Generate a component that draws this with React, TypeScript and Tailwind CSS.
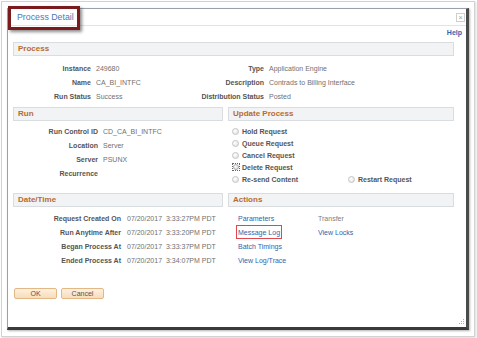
import React from "react";

const Header = ({ title }: { title: string }) => (
  <div className="flex h-[14px] items-center border border-[#d9dde0] bg-[#f1f3f4] pl-[4px] text-[8px] font-bold text-[#b96b30]">
    {title}
  </div>
);

const Radio = ({ focused }: { focused?: boolean }) =>
  focused ? (
    <span className="inline-flex h-[8px] w-[8px] items-center justify-center border border-dotted border-[#666]">
      <span className="inline-block h-[6px] w-[6px] rounded-full border border-[#a8a8a8] bg-[radial-gradient(circle_at_35%_35%,#ffffff,#d6d6d6)]" />
    </span>
  ) : (
    <span className="inline-block h-[7px] w-[7px] rounded-full border border-[#c4c4c4] bg-[radial-gradient(circle_at_35%_35%,#ffffff,#dedede)]" />
  );

const RadioRow = ({ label, focused }: { label: string; focused?: boolean }) => (
  <div className={focused ? "flex h-[12px] items-center gap-[2px]" : "flex h-[12px] items-center gap-[3px]"}>
    <Radio focused={focused} />
    <span className="font-bold text-[#555]">{label}</span>
  </div>
);

const dates = [
  ["Request Created On", "3:33:27PM PDT"],
  ["Run Anytime After", "3:33:20PM PDT"],
  ["Began Process At", "3:33:37PM PDT"],
  ["Ended Process At", "3:34:07PM PDT"],
];

export default function App() {
  return (
    <div className="relative h-[338px] w-[477px] overflow-hidden bg-white font-['Liberation_Sans',Arial,sans-serif] text-[7px] leading-none">
      <div className="ml-[1px] mt-[1px] h-[336px] w-[474px] border border-[#d2d2d2] bg-white pl-[5px] pt-[6px] shadow-[1px_1px_2px_rgba(0,0,0,0.15)]">
        <div className="relative h-[322px] w-[462px] border-b-[3px] border-l border-r-[3px] border-t border-b-[#3a3a3a] border-l-[#a0a0a0] border-r-[#4a4a4a] border-t-[#9aa3ad] bg-white shadow-[1px_1px_2px_rgba(0,0,0,0.3)]">
          {/* title bar */}
          <div className="flex h-[17px] items-center justify-between border-b border-[#e3e3e3] pl-[9px] pr-[1px]">
            <span className="text-[8.8px] text-[#4a78b8]">Process Detail</span>
            <span className="flex h-[9px] w-[9px] items-center justify-center border border-[#cfcfcf] text-[7px] text-[#999]">
              ×
            </span>
          </div>

          <div className="flex h-[13px] items-center justify-end pr-[4px]">
            <span className="text-[7px] font-bold text-[#2f64ae]">Help</span>
          </div>

          <div className="ml-[5px] mt-[3px] w-[441px]">
            {/* Process */}
            <Header title="Process" />
            <div className="mt-[5px]">
              {[
                ["Instance", "249680", "Type", "Application Engine"],
                ["Name", "CA_BI_INTFC", "Description", "Contrads to Billing Interface"],
                ["Run Status", "Success", "Distribution Status", "Posted"],
              ].map(([l1, v1, l2, v2]) => (
                <div key={l1} className="flex h-[14px] items-center">
                  <span className="w-[78px] text-right font-bold text-[#555]">{l1}</span>
                  <span className="ml-[5px] w-[80px] text-[#707070]">{v1}</span>
                  <span className="w-[88px] text-right font-bold text-[#555]">{l2}</span>
                  <span className="ml-[5px] text-[#707070]">{v2}</span>
                </div>
              ))}
            </div>

            {/* Run / Update Process */}
            <div className="mt-[4px] flex gap-[5px]">
              <div className="w-[210px]">
                <Header title="Run" />
                <div className="mt-[3px]">
                  {[
                    ["Run Control ID", "CD_CA_BI_INTFC"],
                    ["Location", "Server"],
                    ["Server", "PSUNX"],
                    ["Recurrence", ""],
                  ].map(([l, v]) => (
                    <div key={l} className="flex h-[14px] items-center">
                      <span className="w-[85px] text-right font-bold text-[#555]">{l}</span>
                      <span className="ml-[5px] text-[#707070]">{v}</span>
                    </div>
                  ))}
                </div>
              </div>
              <div className="w-[226px]">
                <Header title="Update Process" />
                <div className="mt-[4px] pl-[4px]">
                  <RadioRow label="Hold Request" />
                  <RadioRow label="Queue Request" />
                  <RadioRow label="Cancel Request" />
                  <RadioRow label="Delete Request" focused />
                  <div className="flex h-[12px] items-center">
                    <div className="w-[116px]">
                      <RadioRow label="Re-send Content" />
                    </div>
                    <RadioRow label="Restart Request" />
                  </div>
                </div>
              </div>
            </div>

            {/* Date/Time / Actions */}
            <div className="mt-[8px] flex gap-[5px]">
              <div className="w-[210px]">
                <Header title="Date/Time" />
                <div className="mt-[4px]">
                  {dates.map(([l, t]) => (
                    <div key={l} className="flex h-[14px] items-center">
                      <span className="w-[108px] text-right font-bold text-[#555]">{l}</span>
                      <span className="ml-[6px] whitespace-pre text-[#707070]">{`07/20/2017  ${t}`}</span>
                    </div>
                  ))}
                </div>
              </div>
              <div className="w-[226px]">
                <Header title="Actions" />
                <div className="mt-[4px] pl-[10px] text-[#2f64ae]">
                  <div className="flex h-[14px] items-center">
                    <span className="w-[80px]">Parameters</span>
                    <span className="text-[#808080]">Transfer</span>
                  </div>
                  <div className="flex h-[14px] items-center">
                    <span className="w-[80px]">
                      <span className="-ml-[2px] inline-block border border-[#e0474c] px-[1px] py-[2.5px]">
                        Message Log
                      </span>
                    </span>
                    <span>View Locks</span>
                  </div>
                  <div className="flex h-[14px] items-center">Batch Timings</div>
                  <div className="flex h-[14px] items-center">View Log/Trace</div>
                </div>
              </div>
            </div>

            {/* buttons */}
            <div className="mt-[21px] flex gap-[4px] pl-[1px]">
              <button className="flex h-[11px] w-[43px] items-center justify-center rounded-[2px] border border-[#e2b887] bg-gradient-to-b from-[#fdf0e0] to-[#f8dcba] text-[7px] text-[#555]">
                OK
              </button>
              <button className="flex h-[11px] w-[43px] items-center justify-center rounded-[2px] border border-[#e2b887] bg-gradient-to-b from-[#fdf0e0] to-[#f8dcba] text-[7px] text-[#555]">
                Cancel
              </button>
            </div>
          </div>

          {/* resize grip */}
          <svg className="absolute bottom-[2px] right-[1px]" width="7" height="7" viewBox="0 0 7 7">
            <g fill="#b0b0b0">
              <rect x="5" y="1" width="1" height="1" />
              <rect x="3" y="3" width="1" height="1" />
              <rect x="5" y="3" width="1" height="1" />
              <rect x="1" y="5" width="1" height="1" />
              <rect x="3" y="5" width="1" height="1" />
              <rect x="5" y="5" width="1" height="1" />
            </g>
          </svg>
        </div>
      </div>

      {/* annotation box around title */}
      <div className="absolute left-[8px] top-[6px] h-[24px] w-[72px] border-[3px] border-[#7a1b1e] shadow-[2px_2px_3px_rgba(0,0,0,0.45)]" />
    </div>
  );
}
